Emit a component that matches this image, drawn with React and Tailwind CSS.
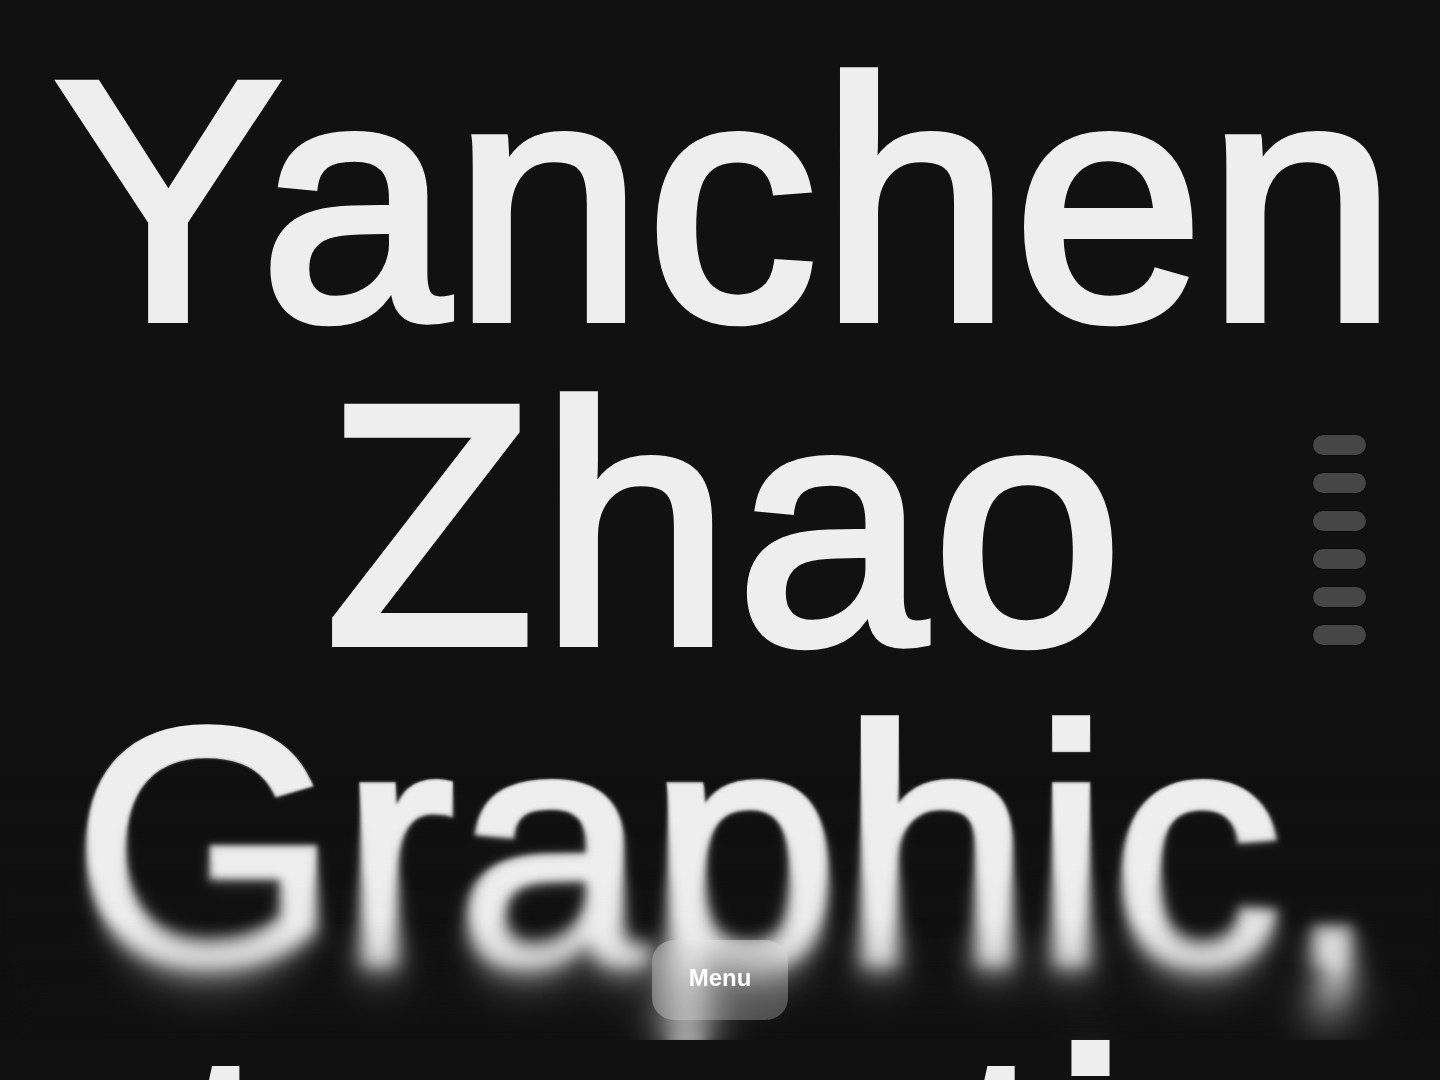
export default function App() {
  return (
    <div className="relative h-[1080px] w-full overflow-hidden bg-[#111111]">
      <main className="flex flex-col pl-[14px] pt-[38px] font-['Liberation_Sans',Arial,sans-serif] text-[342px] leading-[324px] text-[#eeeeee] [-webkit-text-stroke:8px_#eeeeee]">
        <div className="flex w-full justify-center whitespace-nowrap tracking-[3px]">
          <span>Yanchen</span>
        </div>
        <div className="flex w-full justify-center whitespace-nowrap tracking-[6px]">
          <span>Zhao</span>
        </div>
        <div className="flex w-full justify-center whitespace-nowrap tracking-[2px] [clip-path:inset(-100px_-200px_-28px_-200px)]">
          <span>Graphic,</span>
        </div>
        <div className="flex w-full justify-center whitespace-nowrap pr-[48px] tracking-[3px]">
          <span>Interaction</span>
        </div>
      </main>

      {/* side progress indicator */}
      <nav className="absolute right-[74px] top-1/2 flex -translate-y-1/2 flex-col gap-[18px]">
        {[0, 1, 2, 3, 4, 5].map((i) => (
          <span
            key={i}
            className="block h-[20px] w-[53px] rounded-full bg-[#464646] shadow-[0_0_0_1px_rgba(0,0,0,0.35)]"
          />
        ))}
      </nav>

      {/* progressive blur */}
      <div className="pointer-events-none absolute inset-x-0 bottom-[40px] h-[340px]">
        <div className="absolute inset-0 backdrop-blur-[1px] [mask-image:linear-gradient(to_bottom,transparent_8%,black_28%)]" />
        <div className="absolute inset-0 backdrop-blur-[2px] [mask-image:linear-gradient(to_bottom,transparent_22%,black_42%)]" />
        <div className="absolute inset-0 backdrop-blur-[4px] [mask-image:linear-gradient(to_bottom,transparent_36%,black_56%)]" />
        <div className="absolute inset-0 backdrop-blur-[7px] [mask-image:linear-gradient(to_bottom,transparent_50%,black_70%)]" />
        <div className="absolute inset-0 backdrop-blur-[12px] [mask-image:linear-gradient(to_bottom,transparent_64%,black_84%)]" />
        <div className="absolute inset-0 backdrop-blur-[20px] [mask-image:linear-gradient(to_bottom,transparent_78%,black_98%)]" />
      </div>

      {/* menu button */}
      <button className="absolute bottom-[60px] left-1/2 flex h-[80px] w-[136px] -translate-x-1/2 items-center justify-center rounded-[22px] bg-white/25 pb-[4px] font-['Liberation_Sans',Arial,sans-serif] text-[24px] font-bold text-white backdrop-blur-md">
        Menu
      </button>
    </div>
  );
}
